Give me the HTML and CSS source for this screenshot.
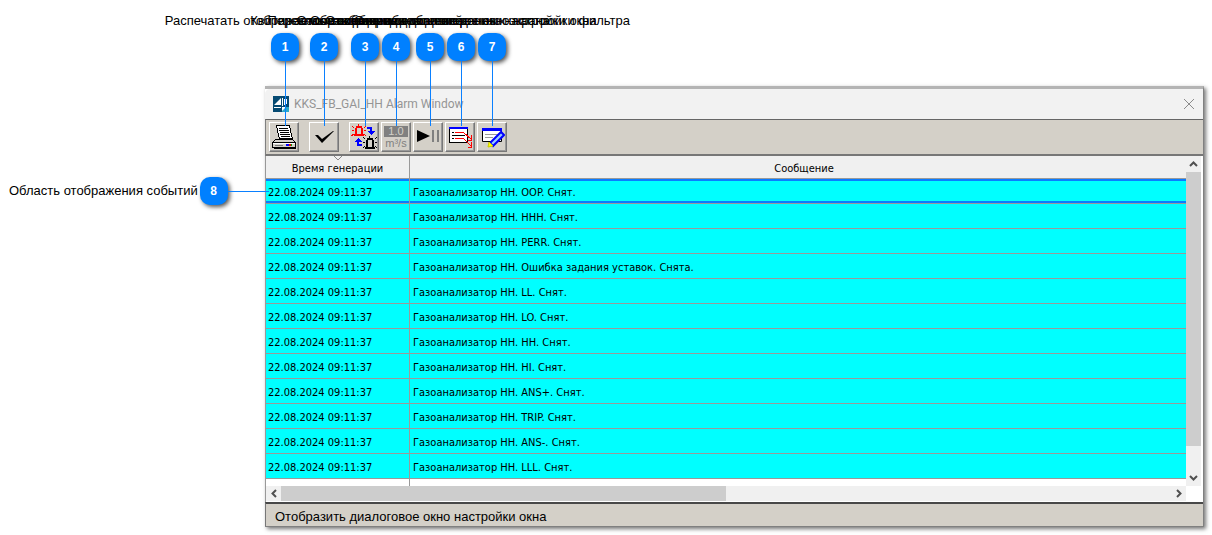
FILE: index.html
```html
<!DOCTYPE html>
<html lang="ru">
<head>
<meta charset="utf-8">
<title>KKS_FB_GAI_HH Alarm Window</title>
<link rel="stylesheet" href="styles.css">
</head>
<body>
<main class="figure">
  <section class="window">
    <header class="titlebar">
      <svg class="app-icon" viewBox="0 0 16 16" aria-hidden="true"><path fill="#064a72" d="M0 0h16v16H0z"/><path fill="#fff" d="M1 9l7-7v7zM9 2h1v8H9zM11 3h1v6h-1zM1 11h7v1H1zM13 3h1v5h-1z"/><path fill="#2aa9c8" d="M9 11h7v5H9z"/><path fill="#fff" d="M9 11h4l-4 4z"/></svg>
      <h1 class="title">KKS_FB_GAI_HH Alarm Window</h1>
      <button class="close" type="button" aria-label="Закрыть"><svg width="12" height="12" viewBox="0 0 12 12"><path d="M1 1l10 10M11 1L1 11" stroke="#8b8b8b" fill="none"/></svg></button>
    </header>
    <div class="toolbar">
      <button class="tool" type="button" aria-label="Печать">
        <svg viewBox="0 0 26 26" shape-rendering="crispEdges"><path fill="#fff" stroke="#000" d="M5.500 1.500h13l3 14h-13z"/><path stroke="#000" d="M8 4.500h9M8 6.500h10M9 8.500h9M9 10.500h10M10 12.500h9"/><path fill="#d4d0c8" stroke="#000" d="M4.500 15.500h17l3 3v5h-23v-5z"/><path fill="#fff" stroke="#000" d="M8 14.500h13"/><path stroke="#000" d="M2 18.500h22M3 24.500h22"/><path stroke="#fff" d="M2 19.500h22"/><path stroke="#e00000" d="M18 21h2" stroke-width="2"/><path stroke="#0000ff" d="M15 21h3" stroke-width="2"/><path stroke="#00a000" d="M20 21h1" stroke-width="2"/><path stroke="#777" d="M4 21.500h8"/></svg>
      </button>
      <button class="tool single" type="button" aria-label="Квитировать">
        <svg viewBox="0 0 26 26"><path d="M4 11h3l4 4 11-8h1L11 19z"/></svg>
      </button>
      <button class="tool" type="button" aria-label="Переключить режим">
        <svg viewBox="0 0 26 26" shape-rendering="crispEdges"><g fill="none" stroke="#f00"><path stroke-width="2" d="M5 11V5l1-2h4l1 2v6M3 11h10"/><path d="M1 6.500h2M13 6.500h2M1 2l2 2M15 2l-2 2M0 12l3-2M15 12l-2-2M7.500 0v2"/></g><g fill="none" stroke="#000"><path stroke-width="2" d="M16 23v-6l1-2h4l1 2v6M14 24h10"/><path d="M12 18.500h2M24 18.500h2M12 13l2 2M26 13l-2 2M12 24l2-2M26 24l-2-2M18.500 12v2"/></g><g stroke="#00f" fill="none" stroke-width="2"><path d="M16 4h4v4M11 21H7v-4"/></g><path fill="#00f" d="M16 7h8l-4 4zM3 18h8l-4-4z"/></svg>
      </button>
      <button class="tool units" type="button"><span class="value">1.0</span><span class="unit">m³/s</span></button>
      <button class="tool" type="button" aria-label="Пауза">
        <svg viewBox="0 0 26 26"><path d="M2 6l13 6-13 6z"/><path fill="#808080" d="M17 6h2v12h-2zM22 6h2v12h-2z"/></svg>
      </button>
      <button class="tool" type="button" aria-label="Настройка окна">
        <svg viewBox="0 0 26 26" shape-rendering="crispEdges"><path fill="#fff" stroke="#000" d="M2.500 4.500h18v14h-18z"/><path fill="#00f" d="M2 3h19v2H2z"/><path stroke="#000" d="M5 8.500h2M5 11.500h13M5 14.500h2"/><path stroke="#f00" fill="none" d="M8 8.500h9M8 14.500h9M17 9l7 6M24.500 11v5h-4M17 15l7 7M24.500 18v5h-4"/></svg>
      </button>
      <button class="tool" type="button" aria-label="Настройка фильтра">
        <svg viewBox="0 0 26 26"><path fill="#fff" stroke="#000" d="M3.500 5.500h19v12h-19z"/><path fill="#00f" d="M3 4h20v3H3z"/><path stroke="#999" d="M6 10.500h13M6 13.500h8"/><path fill="#9cf" stroke="#00f" stroke-width="2" d="M11 19L22 8l3 3-11 11z"/><path fill="#ff0" stroke="#cc0" d="M10 18l4 4-5 1z"/></svg>
      </button>
    </div>
    <div class="view">
      <div class="table-wrap">
        <table class="events">
          <thead><tr><th class="time"><svg class="sort" width="8" height="5" viewBox="0 0 8 5"><path d="M0 0l4 4 4-4" fill="none" stroke="#888"/></svg>Время генерации</th><th class="message">Сообщение</th></tr></thead>
          <tbody>
            <tr class="selected"><td>22.08.2024 09:11:37</td><td>Газоанализатор HH. OOP. Снят.</td></tr>
            <tr><td>22.08.2024 09:11:37</td><td>Газоанализатор HH. HHH. Снят.</td></tr>
            <tr><td>22.08.2024 09:11:37</td><td>Газоанализатор HH. PERR. Снят.</td></tr>
            <tr><td>22.08.2024 09:11:37</td><td>Газоанализатор HH. Ошибка задания уставок. Снята.</td></tr>
            <tr><td>22.08.2024 09:11:37</td><td>Газоанализатор HH. LL. Снят.</td></tr>
            <tr><td>22.08.2024 09:11:37</td><td>Газоанализатор HH. LO. Снят.</td></tr>
            <tr><td>22.08.2024 09:11:37</td><td>Газоанализатор HH. HH. Снят.</td></tr>
            <tr><td>22.08.2024 09:11:37</td><td>Газоанализатор HH. HI. Снят.</td></tr>
            <tr><td>22.08.2024 09:11:37</td><td>Газоанализатор HH. ANS+. Снят.</td></tr>
            <tr><td>22.08.2024 09:11:37</td><td>Газоанализатор HH. TRIP. Снят.</td></tr>
            <tr><td>22.08.2024 09:11:37</td><td>Газоанализатор HH. ANS-. Снят.</td></tr>
            <tr><td>22.08.2024 09:11:37</td><td>Газоанализатор HH. LLL. Снят.</td></tr>
            <tr class="rest"><td></td><td></td></tr>
          </tbody>
        </table>
      </div>
      <div class="vbar">
        <button class="arrow" type="button" aria-label="Вверх"><svg width="9" height="6" viewBox="0 0 9 6"><path d="M1 5l3.500-3.500L8 5"/></svg></button>
        <div class="vtrack"><div class="vthumb"></div></div>
        <button class="arrow" type="button" aria-label="Вниз"><svg width="9" height="6" viewBox="0 0 9 6"><path d="M1 1l3.500 3.500L8 1"/></svg></button>
      </div>
      <div class="hbar">
        <button class="arrow" type="button" aria-label="Влево"><svg width="6" height="9" viewBox="0 0 6 9"><path d="M5 1L1.500 4.500 5 8"/></svg></button>
        <div class="htrack"><div class="hthumb"></div></div>
        <button class="arrow" type="button" aria-label="Вправо"><svg width="6" height="9" viewBox="0 0 6 9"><path d="M1 1l3.500 3.500L1 8"/></svg></button>
      </div>
    </div>
    <footer class="status">Отобразить диалоговое окно настройки окна</footer>
  </section>

  <div class="callout c1"><span class="label">Распечатать отображаемые сообщения</span><span class="badge">1</span></div>
  <div class="callout c2"><span class="label">Квитировать сообщение</span><span class="badge">2</span></div>
  <div class="callout c3"><span class="label">Переключить режим сообщений</span><span class="badge">3</span></div>
  <div class="callout c4"><span class="label">Отображение единиц измерения</span><span class="badge">4</span></div>
  <div class="callout c5"><span class="label">Остановить обновление данных экрана</span><span class="badge">5</span></div>
  <div class="callout c6"><span class="label">Отобразить диалоговое окно настройки окна</span><span class="badge">6</span></div>
  <div class="callout c7"><span class="label">Открыть диалоговое окно настройки фильтра</span><span class="badge">7</span></div>
  <div class="callout side"><span class="label">Область отображения событий</span><span class="badge">8</span></div>
</main>
</body>
</html>
```
FILE: styles.css
```css
* { box-sizing: border-box; }
body { margin: 0; background: #fff; color: #000; font: 13px/16px "Liberation Sans", Arial, sans-serif; }
button { margin: 0; padding: 0; border: 0; background: none; font: inherit; color: inherit; }
svg { display: block; }
.figure { position: relative; padding: 86px 8px 8px 265px; }

.window { border-top: 3px solid #b4b4b4; border-right: 1px solid #808080; border-bottom: 1px solid #808080; box-shadow: 2px 2px 4px #777; background: #fff; }
.titlebar { display: flex; align-items: center; gap: 5px; height: 30px; padding: 0 8px; background: #f2f2f2; border-top-left-radius: 5px; }
.app-icon { width: 16px; height: 16px; }
.title { flex: 1; margin: 0; font: 12px/16px Roboto, sans-serif; color: #959595; }
.close { display: flex; }

.toolbar { display: flex; align-items: center; gap: 2px; padding: 2px 3px; border-top: 1px solid #666; border-left: 1px solid #808080; border-bottom: 2px solid #777; background: #d4d0c8; }
.tool { display: flex; flex-direction: column; align-items: center; justify-content: center; width: 30px; height: 30px; border: 1px solid; border-color: #fff #777 #777 #fff; box-shadow: inset -1px -1px #999; background: #d4d0c8; }
.tool svg { width: 26px; height: 26px; }
.tool.single { margin: 0 8px; }
.units { color: #808080; font: 11px/12px "Liberation Sans", sans-serif; }
.units .value { width: 24px; height: 11px; line-height: 11px; background: #808080; color: #d4d0c8; }

.view { display: grid; grid-template-columns: 1fr 15px; padding: 0 2px 1px 0; border-left: 1px solid #999; }
.events { width: 100%; border-collapse: separate; border-spacing: 0; table-layout: fixed; font: 11px/14px "DejaVu Sans Condensed", "DejaVu Sans", sans-serif; }
.events th { position: relative; height: 23px; padding: 3px 0 0; border-bottom: 1px solid #999; background: #f0f0f0; font-weight: normal; }
.events .time { width: 144px; }
.events .message { padding-left: 12px; }
.events td { height: 25px; padding: 3px 2px 0; border-bottom: 1px solid #999; background: #0ff; white-space: nowrap; }
.events td + td { padding-left: 3px; }
.events th:first-child, .events td:first-child { border-right: 1px solid #999; }
.events .selected td { box-shadow: inset 0 2px #0a7cff, inset 0 -2px #0a7cff; }
.events .rest td { height: 7px; padding: 0; border-bottom: 0; background: #fff; }
.sort { position: absolute; top: 0; left: 50%; margin-left: -4px; }

.vbar, .hbar { display: flex; background: #f0f0f0; }
.vbar { flex-direction: column; }
.hbar { height: 15px; }
.arrow { display: flex; flex: none; align-items: center; justify-content: center; width: 15px; height: 16px; }
.hbar .arrow { height: 15px; }
.arrow path { fill: none; stroke: #505050; stroke-width: 2; }
.vtrack, .htrack { flex: 1; }
.vthumb { height: 92%; background: #cdcdcd; }
.hthumb { width: 50%; height: 100%; background: #cdcdcd; }

.status { height: 24px; padding: 5px 9px 0; border-top: 2px solid #484848; border-left: 1px solid #777; background: #d4d0c8; }

.callout { position: absolute; top: 13px; display: flex; flex-direction: column; align-items: center; gap: 4px; width: 28px; }
.callout::after { content: ""; width: 1px; height: 65px; margin-top: -4px; background: #0a80ff; }
.label { white-space: nowrap; }
.badge { display: flex; align-items: center; justify-content: center; flex: none; width: 28px; height: 28px; border-radius: 10px; background: #0080ff; box-shadow: 2px 2px 4px #555; color: #fff; font-size: 12px; font-weight: bold; }
.c1 { left: 271px; }
.c2 { left: 310px; }
.c3 { left: 351px; }
.c4 { left: 382px; }
.c5 { left: 416px; }
.c6 { left: 447px; }
.c7 { left: 478px; }
.side { top: 177px; left: 9px; flex-direction: row; gap: 2px; width: auto; }
.side::after { width: 41px; height: 1px; margin: 0 0 0 -2px; }
```
